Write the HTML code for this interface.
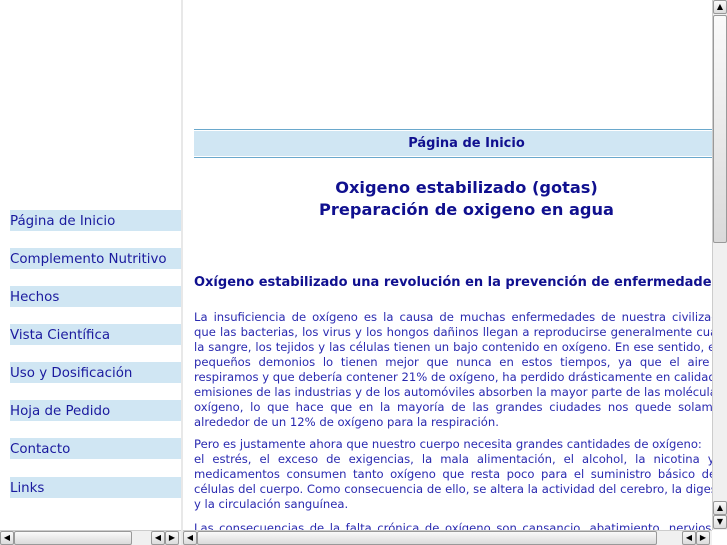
<!DOCTYPE html>
<html><head><meta charset="utf-8"><style>
*{margin:0;padding:0;box-sizing:border-box}
body{width:727px;height:545px;overflow:hidden;background:#fff;font-family:"DejaVu Sans","Liberation Sans",sans-serif;position:relative}
#left{position:absolute;left:0;top:0;width:181px;height:530px;background:#fff;overflow:hidden}
#sep{position:absolute;left:181px;top:0;width:2px;height:545px;background:#e8e8e8}
.nav{position:absolute;left:10px;width:171px;height:21px;background:#d0e6f3;color:#1a1a9e;font-size:13.4px;line-height:22px;padding-top:1px}
#main{position:absolute;left:183px;top:0;width:529px;height:530px;overflow:hidden}
#content{position:absolute;left:11px;top:0;width:545px;color:#2a2ab0}
.bar{position:absolute;top:129px;left:0;width:545px;height:29px;border-top:1px solid #6aa8cc;border-bottom:1px solid #6aa8cc;}
.bar div{margin-top:1px;height:25px;background:#d0e6f3;text-align:center;font-weight:bold;font-size:13px;line-height:26px;color:#10108f}
.t{position:absolute;left:0;width:545px;text-align:center;font-weight:bold;font-size:16.2px;color:#10108f;line-height:22px}
.h{position:absolute;left:0;top:275px;white-space:nowrap;font-weight:bold;font-size:13px;color:#10108f}
.p{position:absolute;left:0;width:545px;font-size:11.6px;line-height:15px}
.p span{display:block;text-align:justify;text-align-last:justify;white-space:nowrap}
.p span.l{text-align-last:left}
.vs{position:absolute;left:712px;top:0;width:15px;height:530px;background:#f0f0f0;border-left:1px solid #ccc}
.btn{position:absolute;width:14px;height:14px;background:linear-gradient(#fafafa,#dcdcdc);border:1px solid #999;border-radius:2px;font-size:8px;line-height:12px;text-align:center;color:#000}
.hs{position:absolute;top:530px;height:15px;background:#f0f0f0;border-top:1px solid #ccc}
.thumb{position:absolute;background:linear-gradient(#fafafa,#dadada);border:1px solid #999;border-radius:2px}
</style></head><body>
<div id="left">
<div class="nav" style="top:210px">Página de Inicio</div>
<div class="nav" style="top:248px">Complemento Nutritivo</div>
<div class="nav" style="top:286px">Hechos</div>
<div class="nav" style="top:324px">Vista Científica</div>
<div class="nav" style="top:362px">Uso y Dosificación</div>
<div class="nav" style="top:400px">Hoja de Pedido</div>
<div class="nav" style="top:438px">Contacto</div>
<div class="nav" style="top:477px">Links</div>
</div>
<div id="sep"></div>
<div id="main"><div id="content">
<div class="bar"><div>Página de Inicio</div></div>
<div class="t" style="top:177px">Oxigeno estabilizado (gotas)</div>
<div class="t" style="top:199px">Preparación de oxigeno en agua</div>
<div class="h">Oxígeno estabilizado una revolución en la prevención de enfermedades</div>
<div class="p" style="top:310px">
<span>La insuficiencia de oxígeno es la causa de muchas enfermedades de nuestra civilización.</span>
<span>que las bacterias, los virus y los hongos dañinos llegan a reproducirse generalmente cuando</span>
<span>la sangre, los tejidos y las células tienen un bajo contenido en oxígeno. En ese sentido, estos</span>
<span>pequeños demonios lo tienen mejor que nunca en estos tiempos, ya que el aire que</span>
<span>respiramos y que debería contener 21% de oxígeno, ha perdido drásticamente en calidad. Las</span>
<span>emisiones de las industrias y de los automóviles absorben la mayor parte de las moléculas de</span>
<span>oxígeno, lo que hace que en la mayoría de las grandes ciudades nos quede solamente</span>
<span class="l">alrededor de un 12% de oxígeno para la respiración.</span>
</div>
<div class="p" style="top:437px">
<span class="l">Pero es justamente ahora que nuestro cuerpo necesita grandes cantidades de oxígeno:</span>
<span>el estrés, el exceso de exigencias, la mala alimentación, el alcohol, la nicotina y los</span>
<span>medicamentos consumen tanto oxígeno que resta poco para el suministro básico de las</span>
<span>células del cuerpo. Como consecuencia de ello, se altera la actividad del cerebro, la digestión</span>
<span class="l">y la circulación sanguínea.</span>
</div>
<div class="p" style="top:521px">
<span>Las consecuencias de la falta crónica de oxígeno son cansancio, abatimiento, nerviosismo</span>
</div>
</div></div>
<div class="vs">
<div class="thumb" style="left:0;top:15px;width:14px;height:228px"></div>
<div class="btn" style="left:0;top:0">▲</div>
<div class="btn" style="left:0;top:501px">▲</div>
<div class="btn" style="left:0;top:515px">▼</div>
</div>
<div class="hs" style="left:0;width:181px">
<div class="btn" style="left:0;top:0">◀</div>
<div class="thumb" style="left:14px;top:0;width:118px;height:14px"></div>
<div class="btn" style="left:151px;top:0">◀</div>
<div class="btn" style="left:165px;top:0">▶</div>
</div>
<div class="hs" style="left:183px;width:529px">
<div class="btn" style="left:0;top:0">◀</div>
<div class="thumb" style="left:14px;top:0;width:460px;height:14px"></div>
<div class="btn" style="left:499px;top:0">◀</div>
<div class="btn" style="left:513px;top:0">▶</div>
</div>
</body></html>
